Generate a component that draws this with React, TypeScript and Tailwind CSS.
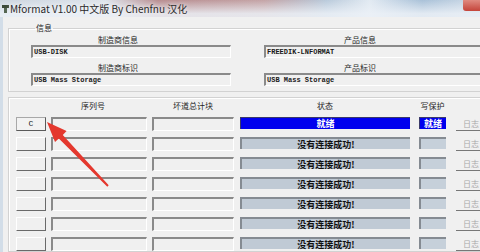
import React from "react"

const mono = "font-['Liberation_Mono',monospace]"
const sunken =
  "border-t-2 border-l-2 border-t-[#8a8a8a] border-l-[#8a8a8a] border-b border-r border-b-white border-r-white"

function InfoField({ text }: { text: string }) {
  return (
    <div className={`h-[13px] flex items-center pl-[1px] text-[7px] font-bold text-[#1a1a1a] ${sunken} ${mono}`}>
      {text}
    </div>
  )
}

function DeviceRow({ ready }: { ready: boolean }) {
  return (
    <div className="flex items-start h-[14px]">
      {ready ? (
        <div
          className={`w-[30px] h-[14px] flex items-center justify-center border border-t-[#a8a8a8] border-l-[#a8a8a8] border-b-[#5a5a5a] border-r-[#5a5a5a] bg-[#f2f2f2] text-[8px] text-[#222] ${mono}`}
        >
          C
        </div>
      ) : (
        <div className="w-[30px] h-[14px] border border-t-white border-l-white border-b-[#6a6a6a] border-r-[#6a6a6a] bg-[#f0f0f0]" />
      )}
      <div className={`ml-[5px] w-[96px] h-[14px] bg-[#f0f0f0] ${sunken}`} />
      <div className={`ml-[5px] w-[82px] h-[14px] bg-[#f0f0f0] ${sunken}`} />
      {ready ? (
        <div className="ml-[6px] w-[170px] h-[12px] flex items-center justify-center bg-[#0000ee] border-t border-l border-[#3a3a6a] text-[9px] leading-none font-bold text-white">
          就绪
        </div>
      ) : (
        <div className="ml-[6px] w-[170px] h-[12px] flex items-center justify-center bg-[#c0cad5] border-t-2 border-l-2 border-t-[#858b92] border-l-[#858b92] text-[9px] leading-none font-bold text-[#111]">
          没有连接成功!
        </div>
      )}
      {ready ? (
        <div className="ml-[9px] w-[27px] h-[12px] flex items-center justify-center bg-[#0000ee] border-t border-l border-[#3a3a6a] text-[9px] leading-none font-bold text-white">
          就绪
        </div>
      ) : (
        <div className="ml-[9px] w-[27px] h-[12px] bg-[#c6d0da] border-t-2 border-l-2 border-t-[#858b92] border-l-[#858b92]" />
      )}
      <div className="ml-[10px] w-[34px] h-[14px] flex items-center justify-center pr-[3px] border-b border-r border-b-[#777] border-r-[#777] text-[8px] leading-none text-[#a8a8a8]">
        日志
      </div>
    </div>
  )
}

export default function App() {
  const rows = [true, false, false, false, false, false, false]

  return (
    <div className="relative w-[480px] h-[252px] overflow-hidden bg-[#f0f0f0] font-['Noto_Sans_CJK_SC','Noto_Sans',sans-serif] text-[#1e1e1e]">
      {/* Title bar */}
      <div className="h-[17px] flex items-center bg-[linear-gradient(180deg,rgba(255,255,255,0)_0%,rgba(236,241,247,0.85)_80%),linear-gradient(90deg,#cdd6e0_0%,#dde3ea_22%,#b88d90_33%,#c4a4a6_55%,#b9cadb_68%,#e2eaf2_77%,#a9c1d8_88%,#c3d3e3_96%)]">
        <svg width="7" height="8" viewBox="0 0 7 8" className="ml-[2px] shrink-0">
          <rect x="0" y="0" width="7" height="3" fill="#3c4a3a" />
          <rect x="2" y="3" width="3" height="5" fill="#556652" />
        </svg>
        <span className="ml-[1px] text-[10px] leading-none text-[#2a2a2a] [text-shadow:0_0_4px_#fff]">
          Mformat V1.00 中文版 By Chenfnu 汉化
        </span>
        <div className="ml-auto self-start w-[17px] h-[11px] rounded-bl-[3px] bg-[linear-gradient(180deg,#e08a80,#c4443a)]" />
      </div>

      {/* Body */}
      <div className="h-[235px] border-l-[3px] border-[#d2dde8] pl-[5px] flex flex-col">
        <fieldset className="mt-[5px] w-[500px] border border-[#d2d2d2] shadow-[inset_1px_1px_0_#fff] pl-[22px] pb-[5px]">
          <legend className="ml-[4px] px-[1px] text-[8px] leading-[12px] text-[#222]">信息</legend>
          <div className="flex gap-[33px]">
            <div className="w-[200px] flex flex-col">
              <div className="w-[174px] text-center text-[8px] leading-[11px]">制造商信息</div>
              <InfoField text="USB-DISK" />
              <div className="mt-[4px] w-[174px] text-center text-[8px] leading-[11px]">制造商标识</div>
              <InfoField text="USB Mass Storage" />
            </div>
            <div className="w-[240px] flex flex-col">
              <div className="w-[192px] text-center text-[8px] leading-[11px]">产品信息</div>
              <InfoField text="FREEDIK-LNFORMAT" />
              <div className="mt-[4px] w-[192px] text-center text-[8px] leading-[11px]">产品标识</div>
              <InfoField text="USB Mass Storage" />
            </div>
          </div>
        </fieldset>

        <fieldset className="mt-[5px] w-[500px] flex-1 border border-[#d2d2d2] shadow-[inset_1px_1px_0_#fff] pl-[7px] pt-[3px]">
          <div className="flex h-[10px] items-center text-[8px] leading-[10px]">
            <div className="w-[30px]" />
            <div className="ml-[5px] w-[96px] text-center pr-[12px]">序列号</div>
            <div className="ml-[5px] w-[82px] text-center">坏道总计块</div>
            <div className="ml-[6px] w-[170px] text-center">状态</div>
            <div className="ml-[9px] w-[27px] text-center whitespace-nowrap">写保护</div>
          </div>
          <div className="mt-[6px] flex flex-col gap-[6px]">
            {rows.map((r, i) => (
              <DeviceRow key={i} ready={r} />
            ))}
          </div>
        </fieldset>
      </div>

      {/* Annotation arrow */}
      <svg width="480" height="252" className="absolute inset-0 pointer-events-none">
        <polygon
          points="47,122 66.6,131 62.8,135 108.7,185.3 107.3,186.7 58.8,138.6 55,142"
          fill="#e4382e"
        />
      </svg>
    </div>
  )
}
